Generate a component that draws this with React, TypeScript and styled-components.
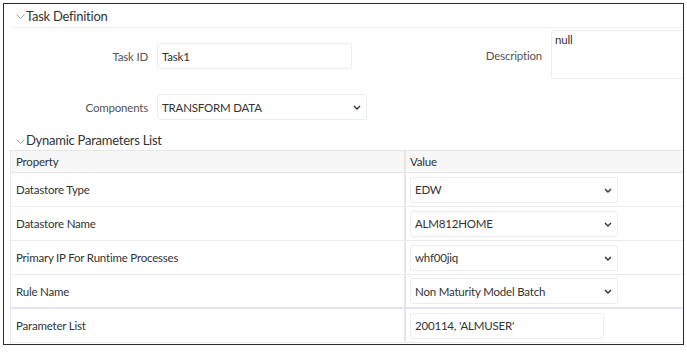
import React from 'react';
import styled, { createGlobalStyle } from 'styled-components';

const GlobalStyle = createGlobalStyle`
    body {
        margin: 0;
        background: #fff;
        font-family: Lato, 'Open Sans', sans-serif;
        color: #333;
    }
`;

type Param = {
    name: string;
    value: string;
    kind: 'select' | 'input';
    accent?: boolean;
};

const params: Param[] = [
    { name: 'Datastore Type', value: 'EDW', kind: 'select' },
    { name: 'Datastore Name', value: 'ALM812HOME', kind: 'select' },
    { name: 'Primary IP For Runtime Processes', value: 'whf00jiq', kind: 'select' },
    { name: 'Rule Name', value: 'Non Maturity Model Batch', kind: 'select', accent: true },
    { name: 'Parameter List', value: "200114, 'ALMUSER'", kind: 'input' },
];

const Caret = () => (
    <svg width="9" height="5" viewBox="0 0 9 5">
        <path d="M0.5 0.5 L4.5 4.5 L8.5 0.5" fill="none" stroke="#a0a0a0" strokeWidth="1" />
    </svg>
);

const DownArrow = () => (
    <svg width="8" height="5" viewBox="0 0 8 5">
        <path d="M1 1 L4 4 L7 1" fill="none" stroke="#333" strokeWidth="1.4" />
    </svg>
);

const Select: React.FC<{ value: string; width: number }> = ({ value, width }) => (
    <SelectWrap $width={width}>
        <SelectBox defaultValue={value}>
            <option>{value}</option>
        </SelectBox>
        <ArrowSlot>
            <DownArrow />
        </ArrowSlot>
    </SelectWrap>
);

export default function App() {
    return (
        <>
            <GlobalStyle />
            <Frame>
                <SectionHeader>
                    <Caret />
                    <span>Task Definition</span>
                </SectionHeader>

                <FormRow>
                    <FieldGroup>
                        <Label>Task ID</Label>
                        <TextInput $width={195} defaultValue="Task1" />
                    </FieldGroup>
                    <DescGroup>
                        <DescLabel>Description</DescLabel>
                        <TextArea defaultValue="null" />
                    </DescGroup>
                </FormRow>

                <ComponentsRow>
                    <Label>Components</Label>
                    <Select value="TRANSFORM DATA" width={210} />
                </ComponentsRow>

                <SectionHeader $plain>
                    <Caret />
                    <span>Dynamic Parameters List</span>
                </SectionHeader>

                <Table>
                    <HeadRow>
                        <HeadCell>Property</HeadCell>
                        <HeadCell $value>Value</HeadCell>
                    </HeadRow>
                    {params.map((p) => (
                        <Row key={p.name} $accent={p.accent}>
                            <NameCell>{p.name}</NameCell>
                            <ValueCell>
                                {p.kind === 'select' ? (
                                    <Select value={p.value} width={208} />
                                ) : (
                                    <TextInput $width={194} defaultValue={p.value} />
                                )}
                            </ValueCell>
                        </Row>
                    ))}
                </Table>
            </Frame>
        </>
    );
}

const Frame = styled.div`
    margin: 3px;
    width: 681px;
    height: 342px;
    box-sizing: border-box;
    border: 1px solid #2b2b2b;
    overflow: hidden;
    font-size: 11.5px;
    letter-spacing: -0.2px;
`;

const SectionHeader = styled.div<{ $plain?: boolean }>`
    display: flex;
    align-items: center;
    gap: 1px;
    margin-left: 7px;
    padding-left: 5px;
    height: ${(p) => (p.$plain ? '20px' : '23px')};
    margin-top: ${(p) => (p.$plain ? '10px' : '0')};
    border-bottom: ${(p) => (p.$plain ? 'none' : '1px solid #efefef')};
    font-size: 13px;
    letter-spacing: -0.25px;
    color: #333;
    svg {
        margin-top: 2px;
    }
`;

const FormRow = styled.div`
    display: flex;
    margin-top: 2px;
    height: 49px;
`;

const FieldGroup = styled.div`
    display: flex;
    align-items: center;
    height: 26px;
    margin-top: 13px;
`;

const Label = styled.label`
    width: 153px;
    padding-right: 9px;
    box-sizing: border-box;
    text-align: right;
    color: #555;
`;

const TextInput = styled.input<{ $width: number }>`
    width: ${(p) => p.$width}px;
    height: 26px;
    box-sizing: border-box;
    border: 1px solid #ececec;
    border-radius: 3px;
    padding: 0 4px;
    font-family: inherit;
    font-size: inherit;
    letter-spacing: inherit;
    color: #333;
    background: #fff;
    outline: none;
`;

const DescGroup = styled.div`
    flex: 1;
    display: flex;
    align-items: flex-start;
`;

const DescLabel = styled.label`
    flex: 1;
    text-align: right;
    padding-right: 9px;
    margin-top: 19px;
    color: #555;
`;

const TextArea = styled.textarea`
    width: 142px;
    height: 49px;
    margin-right: -10px;
    box-sizing: border-box;
    border: 1px solid #ececec;
    border-radius: 3px;
    padding: 2px 3px;
    resize: none;
    font-family: inherit;
    font-size: inherit;
    letter-spacing: inherit;
    color: #333;
    outline: none;
`;

const ComponentsRow = styled.div`
    display: flex;
    align-items: center;
    margin-top: 15px;
`;

const SelectWrap = styled.div<{ $width: number }>`
    position: relative;
    width: ${(p) => p.$width}px;
    height: 26px;
`;

const SelectBox = styled.select`
    appearance: none;
    width: 100%;
    height: 100%;
    box-sizing: border-box;
    border: 1px solid #e6eeee;
    border-radius: 3px;
    padding: 0 4px;
    background: #fff;
    font-family: inherit;
    font-size: inherit;
    letter-spacing: inherit;
    color: #333;
    outline: none;
`;

const ArrowSlot = styled.span`
    position: absolute;
    right: 6px;
    top: 11px;
    display: flex;
    pointer-events: none;
`;

const Table = styled.div`
    margin-left: 6px;
    border-left: 1px solid #e6e6e6;
    border-top: 1px solid #e6e6e6;
`;

const HeadRow = styled.div`
    display: grid;
    grid-template-columns: 393px 1fr;
    height: 21px;
    background: #f7f7f7;
    border-bottom: 1px solid #e6e6e6;
`;

const HeadCell = styled.div<{ $value?: boolean }>`
    display: flex;
    align-items: center;
    padding-left: ${(p) => (p.$value ? '4px' : '5px')};
    border-left: ${(p) => (p.$value ? '2px solid #e6e6e6' : 'none')};
    color: #333;
`;

const Row = styled.div<{ $accent?: boolean }>`
    display: grid;
    grid-template-columns: 393px 1fr;
    height: 34px;
    box-sizing: border-box;
    border-bottom: ${(p) => (p.$accent ? '2px solid #e3e2f6' : '1px solid #ececec')};
`;

const NameCell = styled.div`
    display: flex;
    align-items: center;
    padding-left: 5px;
    color: #333;
`;

const ValueCell = styled.div`
    display: flex;
    align-items: center;
    padding-left: 4px;
    border-left: 2px solid #e6e6e6;
`;
